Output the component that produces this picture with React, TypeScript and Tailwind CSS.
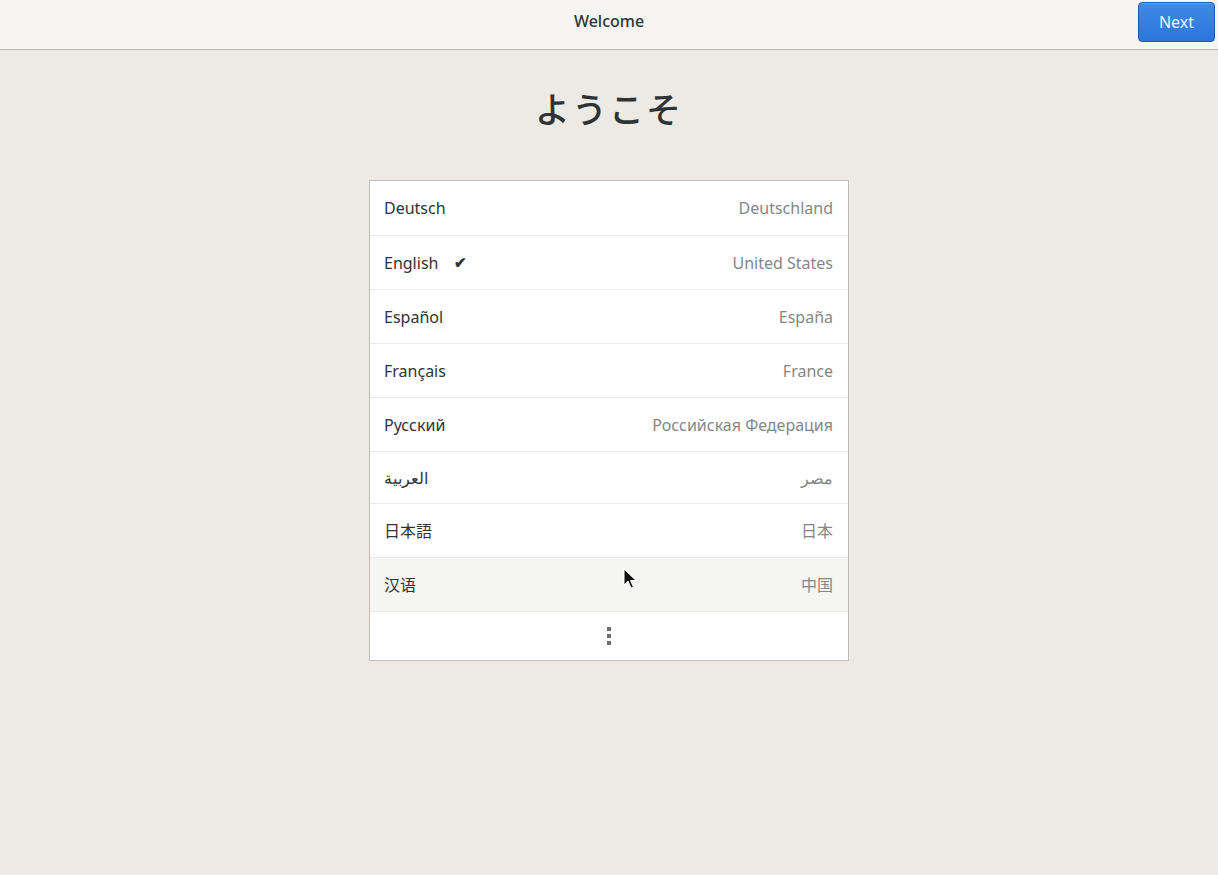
import React from "react";

const langs = [
  { name: "Deutsch", region: "Deutschland" },
  { name: "English", region: "United States", checked: true },
  { name: "Español", region: "España" },
  { name: "Français", region: "France" },
  { name: "Русский", region: "Российская Федерация" },
  { name: "العربية", region: "مصر", short: true },
  { name: "日本語", region: "日本" },
  { name: "汉语", region: "中国", hover: true },
];

function Cursor() {
  return (
    <svg
      className="absolute left-[253px] top-[10px]"
      width="14"
      height="22"
      viewBox="0 0 14 22"
    >
      <path
        d="M1 1 L1 17 L5 13 L8 20 L10.5 19 L7.5 12.5 L13 12.5 Z"
        fill="#111"
        stroke="#fff"
        strokeWidth="1"
      />
    </svg>
  );
}

export default function App() {
  return (
    <div
      className="w-[1218px] h-[875px] bg-[#edeae6] flex flex-col text-[#2e3436]"
      style={{ fontFamily: '"Noto Sans", "Noto Sans CJK JP", sans-serif' }}
    >
      <header className="h-[50px] shrink-0 bg-[#f6f5f4] border-b border-[#b6b6b3] flex items-center justify-center relative">
        <span className="text-[16px] font-medium text-[#2e3436] -mt-[8px]">
          Welcome
        </span>
        <button className="absolute right-[3px] top-[2px] w-[77px] h-[40px] rounded-[4px] border border-[#1b5ab0] bg-gradient-to-b from-[#3f8ae5] to-[#2a76dc] text-[#eef4fc] text-[16px] shadow-[inset_0_1px_0_rgba(255,255,255,0.2)]">
          Next
        </button>
      </header>

      <main className="flex flex-col items-center">
        <h1 className="mt-[36px] text-[35px] font-medium leading-[48px] tracking-[2px] text-[#2e3436]">
          ようこそ
        </h1>
        <div className="mt-[46px] w-[480px] bg-white border border-[#c0bdb8] flex flex-col">
          {langs.map((l, ix) => (
            <div
              key={ix}
              className={`relative ${l.short ? "h-[52px]" : "h-[54px]"} flex items-center justify-between px-[14px] text-[16px] ${
                ix > 0 ? "border-t border-[#ebebea]" : ""
              } ${l.hover ? "bg-[#f5f5f4]" : "bg-white"}`}
            >
              <span className="flex items-center gap-[16px] text-[#2e3436]">
                {l.name}
                {l.checked && <span className="text-[15px] font-bold">✔</span>}
              </span>
              <span className="text-[#858787] pr-[1px]">{l.region}</span>
              {l.hover && <Cursor />}
            </div>
          ))}
          <div className="h-[49px] border-t border-[#ebebea] flex items-center justify-center">
            <svg width="4" height="18" viewBox="0 0 4 18">
              <rect x="0" y="0" width="4" height="4" fill="#6f7071" />
              <rect x="0" y="7" width="4" height="4" fill="#6f7071" />
              <rect x="0" y="14" width="4" height="4" fill="#6f7071" />
            </svg>
          </div>
        </div>
      </main>
    </div>
  );
}
